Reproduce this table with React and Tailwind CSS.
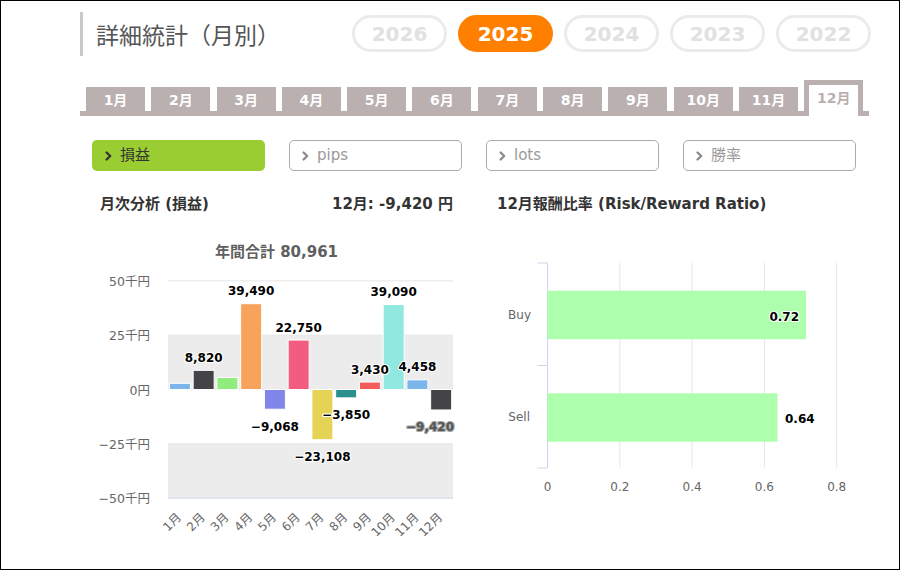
import React from "react";

const YEARS = ["2026", "2025", "2024", "2023", "2022"];
const MONTHS = ["1月","2月","3月","4月","5月","6月","7月","8月","9月","10月","11月","12月"];
const DATA = [2850, 8820, 5519, 39490, -9068, 22750, -23108, -3850, 3430, 39090, 4458, -9420];
const COLORS = ["#7cb5ec","#434348","#90ed7d","#f7a35c","#8085e9","#f15c80","#e4d354","#2b908f","#f45b5b","#91e8e1","#7cb5ec","#434348"];

function Chevron({ color }) {
  return (
    <svg width="7" height="10" viewBox="0 0 7 10" className="shrink-0">
      <path d="M1.6 1.5 L5.2 5 L1.6 8.5" fill="none" stroke={color} strokeWidth="2.3" strokeLinecap="round" strokeLinejoin="round" />
    </svg>
  );
}

function fmt(v) {
  const s = Math.abs(v).toLocaleString("en-US");
  return v < 0 ? "\u2212" + s : s;
}

function MonthlyChart() {
  const plotL = 76, plotR = 361, zeroY = 159.5, k = 0.002173;
  const catW = (plotR - plotL) / 12;
  const yAt = (v) => zeroY - v * k;
  const levels = [50000, 25000, 0, -25000, -50000];
  const ylab = ["50千円", "25千円", "0円", "\u221225千円", "\u221250千円"];
  return (
    <svg width="372" height="310" className="block">
      <text x="184.5" y="27" textAnchor="middle" fontSize="15" fontWeight="bold" fill="#5f5f5f">年間合計 80,961</text>
      <rect x={plotL} y={yAt(25000)} width={plotR - plotL} height={yAt(0) - yAt(25000)} fill="#ececec" />
      <rect x={plotL} y={yAt(-25000)} width={plotR - plotL} height={yAt(-50000) - yAt(-25000)} fill="#ececec" />
      {levels.map((lv, i) => (
        <line key={lv} x1={plotL} x2={plotR} y1={yAt(lv)} y2={yAt(lv)} stroke={i === 4 ? "#ccd6eb" : "#e6e6e6"} strokeWidth="1" />
      ))}
      {levels.map((lv, i) => (
        <text key={"l" + lv} x="58" y={yAt(lv) + 5} textAnchor="end" fontSize="12.5" fill="#666">{ylab[i]}</text>
      ))}
      {DATA.map((v, i) => {
        const x = plotL + i * catW + 1.4;
        const top = v >= 0 ? yAt(v) : zeroY;
        const h = Math.abs(v) * k;
        return <rect key={i} x={x} y={top} width="21" height={h} fill={COLORS[i]} stroke="#fff" strokeWidth="1" />;
      })}
      {DATA.map((v, i) => {
        if (i === 0 || i === 2) return null;
        const cx = i === 11 ? 338 : plotL + (i + 0.5) * catW;
        const y = v >= 0 ? yAt(v) - 8.5 : yAt(v) + 21.5;
        const ghost = i === 11;
        return (
          <text key={"d" + i} x={cx} y={y} textAnchor="middle" fontSize="12" fontWeight="bold"
            fill={ghost ? "#555" : "#000"} stroke={ghost ? "#aaa" : "#fff"} strokeWidth="2.2" paintOrder="stroke" strokeLinejoin="round">
            {fmt(v)}
          </text>
        );
      })}
      {MONTHS.map((m, i) => {
        const px = plotL + (i + 0.5) * catW + 2;
        const py = 288;
        return (
          <text key={"x" + m} x={px} y={py} textAnchor="end" fontSize="12" fill="#666" transform={`rotate(-45 ${px} ${py})`}>{m}</text>
        );
      })}
    </svg>
  );
}

function RatioChart() {
  const ax = 60.5, per = 72.3;
  return (
    <svg width="370" height="280" className="block">
      {[1, 2, 3, 4].map((i) => (
        <line key={i} x1={ax + per * i} x2={ax + per * i} y1="33" y2="238" stroke="#e6e6e6" strokeWidth="1" />
      ))}
      <line x1={ax} x2={ax} y1="33" y2="238" stroke="#ccd6eb" strokeWidth="1" />
      {[33, 135.5, 238].map((y) => (
        <line key={y} x1="50.5" x2={ax} y1={y} y2={y} stroke="#ccd6eb" strokeWidth="1" />
      ))}
      <rect x={ax} y="60.7" width="258.5" height="48.6" fill="#adffad" />
      <rect x={ax} y="163.3" width="230" height="48.4" fill="#adffad" />
      <text x="312" y="90.5" textAnchor="end" fontSize="12" fontWeight="bold" fill="#000" stroke="#fff" strokeWidth="2.2" paintOrder="stroke" strokeLinejoin="round">0.72</text>
      <text x="298" y="192.5" textAnchor="start" fontSize="12" fontWeight="bold" fill="#000" stroke="#fff" strokeWidth="2.2" paintOrder="stroke" strokeLinejoin="round">0.64</text>
      <text x="44" y="89" textAnchor="end" fontSize="12" fill="#666">Buy</text>
      <text x="43" y="191" textAnchor="end" fontSize="12" fill="#666">Sell</text>
      {["0", "0.2", "0.4", "0.6", "0.8"].map((t, i) => (
        <text key={t} x={ax + per * i} y="261" textAnchor="middle" fontSize="12" fill="#666">{t}</text>
      ))}
    </svg>
  );
}

export default function App() {
  return (
    <div className="w-[900px] h-[570px] border border-black bg-white overflow-hidden font-['DejaVu_Sans','Noto_Sans_CJK_JP',sans-serif]">
      <div className="pl-[79px] pt-[11px]">
        {/* header */}
        <div className="flex items-start">
          <div className="w-[272px] h-[44px] border-l-[3px] border-[#c8c8c8] pl-[13px] flex items-center text-[23px] text-[#555] font-['Noto_Sans_CJK_JP',sans-serif] font-normal">
            詳細統計（月別）
          </div>
          <div className="flex gap-[11px] mt-[3px]">
            {YEARS.map((y) => (
              <div
                key={y}
                className={
                  y === "2025"
                    ? "w-[95px] h-[37px] rounded-full border-[3px] border-[#ff8000] bg-[#ff8000] text-white text-[20px] font-bold flex items-center justify-center"
                    : "w-[95px] h-[37px] rounded-full border-[3px] border-[#ebebeb] bg-white text-[#e1e1e1] text-[20px] font-bold flex items-center justify-center"
                }
              >
                {y}
              </div>
            ))}
          </div>
        </div>

        {/* month tabs */}
        <div className="mt-[24px] w-[789px] h-[36px] border-b-[5px] border-[#bab0b0] flex items-end gap-[6.3px] pl-[6px]">
          {MONTHS.map((m) =>
            m === "12月" ? (
              <div key={m} className="w-[59px] h-[36px] mb-[-5px] border-[5px] border-b-0 border-[#bab0b0] bg-white flex justify-center pt-[4px] text-[14px] font-bold text-[#bab0b0] leading-[18px]">
                {m}
              </div>
            ) : (
              <div key={m} className="w-[59px] h-[24px] bg-[#bab0b0] flex items-center justify-center pt-[2px] text-[14px] font-bold text-white">
                {m}
              </div>
            )
          )}
        </div>

        {/* metric buttons */}
        <div className="mt-[24px] ml-[12px] flex gap-[24px]">
          <div className="w-[173px] h-[31px] rounded-[5px] bg-[#9acd32] flex items-center pl-[13px] gap-[8px] text-[15px] text-[#333]">
            <Chevron color="#333" />
            <span>損益</span>
          </div>
          {["pips", "lots", "勝率"].map((t) => (
            <div key={t} className="w-[173px] h-[31px] rounded-[5px] border-[1.5px] border-[#aaa] flex items-center pl-[12px] gap-[8px] text-[15px] text-[#999]">
              <Chevron color="#8a8a8a" />
              <span>{t}</span>
            </div>
          ))}
        </div>

        {/* charts */}
        <div className="mt-[23px] ml-[12px] flex">
          <div className="w-[395px]">
            <div className="w-[361px] pl-[8px] h-[20px] flex items-center justify-between text-[15px] font-bold text-[#333]">
              <span>月次分析 (損益)</span>
              <span>12月: -9,420 円</span>
            </div>
            <div className="mt-[16px]">
              <MonthlyChart />
            </div>
          </div>
          <div>
            <div className="pl-[10px] h-[20px] flex items-center text-[15px] font-bold text-[#333]">
              12月報酬比率 (Risk/Reward Ratio)
            </div>
            <div className="mt-[16px]">
              <RatioChart />
            </div>
          </div>
        </div>
      </div>
    </div>
  );
}
